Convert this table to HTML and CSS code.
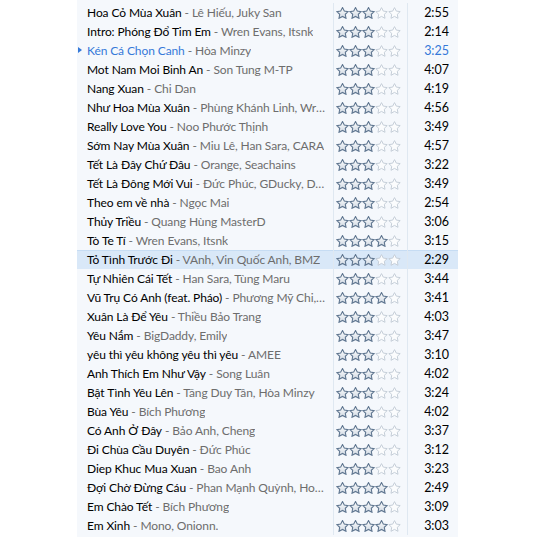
FILE: index.html
```html
<!DOCTYPE html>
<html lang="vi">
<head>
    <meta charset="UTF-8">
    <title>Playlist</title>
    <link rel="stylesheet" href="styles.css">
</head>
<body>
    <svg class="defs" width="0" height="0">
        <defs>
            <linearGradient id="starFill" x1="0" y1="0" x2="0" y2="1">
                <stop offset="0" stop-color="#ffffff"/>
                <stop offset="1" stop-color="#cfd8e2"/>
            </linearGradient>
            <path id="star" d="M6.5 0.6 L8.3 4.1 L12.2 4.6 L9.3 7.3 L10 11.3 L6.5 9.4 L3 11.3 L3.7 7.3 L0.8 4.6 L4.7 4.1 Z"/>
        </defs>
    </svg>

    <!-- Song list -->
    <div class="list" id="list"></div>

    <script>
        const songs = [
            ['Hoa Cỏ Mùa Xuân', 'Lê Hiếu, Juky San', '2:55', 3],
            ['Intro: Phóng Đổ Tim Em', 'Wren Evans, Itsnk', '2:14', 3],
            ['Kén Cá Chọn Canh', 'Hòa Minzy', '3:25', 3, 'playing'],
            ['Mot Nam Moi Binh An', 'Son Tung M-TP', '4:07', 3],
            ['Nang Xuan', 'Chi Dan', '4:19', 3],
            ['Như Hoa Mùa Xuân', 'Phùng Khánh Linh, Wren Evans', '4:56', 3],
            ['Really Love You', 'Noo Phước Thịnh', '3:49', 3],
            ['Sớm Nay Mùa Xuân', 'Miu Lê, Han Sara, CARA', '4:57', 3],
            ['Tết Là Đây Chứ Đâu', 'Orange, Seachains', '3:22', 3],
            ['Tết Là Đông Mới Vui', 'Đức Phúc, GDucky, DTAP', '3:49', 3],
            ['Theo em về nhà', 'Ngọc Mai', '2:54', 3],
            ['Thủy Triều', 'Quang Hùng MasterD', '3:06', 3],
            ['Tò Te Tí', 'Wren Evans, Itsnk', '3:15', 4],
            ['Tỏ Tình Trước Đi', 'VAnh, Vin Quốc Anh, BMZ', '2:29', 3, 'selected'],
            ['Tự Nhiên Cái Tết', 'Han Sara, Tùng Maru', '3:44', 3],
            ['Vũ Trụ Có Anh (feat. Pháo)', 'Phương Mỹ Chi, Pháo', '3:41', 4],
            ['Xuân Là Để Yêu', 'Thiều Bảo Trang', '4:03', 3],
            ['Yêu Nắm', 'BigDaddy, Emily', '3:47', 3],
            ['yêu thì yêu không yêu thì yêu', 'AMEE', '3:10', 3],
            ['Anh Thích Em Như Vậy', 'Song Luân', '4:02', 3],
            ['Bật Tình Yêu Lên', 'Tăng Duy Tân, Hòa Minzy', '3:24', 3],
            ['Bùa Yêu', 'Bích Phương', '4:02', 3],
            ['Có Anh Ở Đây', 'Bảo Anh, Cheng', '3:37', 3],
            ['Đi Chùa Cầu Duyên', 'Đức Phúc', '3:12', 3],
            ['Diep Khuc Mua Xuan', 'Bao Anh', '3:23', 3],
            ['Đợi Chờ Đừng Cáu', 'Phan Mạnh Quỳnh, Hoàng Dũng', '2:49', 4],
            ['Em Chào Tết', 'Bích Phương', '3:09', 4],
            ['Em Xinh', 'Mono, Onionn.', '3:03', 4]
        ];

        const list = document.getElementById('list');

        songs.forEach(([title, artist, time, rating, state]) => {
            const row = document.createElement('div');
            row.className = 'row' + (state ? ' ' + state : '');

            let stars = '';
            for (let i = 0; i < 5; i++) {
                stars += `<svg class="star ${i < rating ? 'on' : 'off'}" width="13" height="12" viewBox="0 0 13 12"><use href="#star"/></svg>`;
            }

            row.innerHTML = `
                <div class="name"><span class="title">${title}</span><span class="artist"> - ${artist}</span></div>
                <div class="rating">${stars}</div>
                <div class="time">${time}</div>
            `;
            list.appendChild(row);
        });
    </script>
</body>
</html>
```

FILE: styles.css
```css
body { margin: 0; background-color: #ffffff; font-family: Lato, "Noto Sans", sans-serif; font-size: 12px; }
.defs { position: absolute; }
.list { margin-left: 77px; width: 381px; height: 537px; padding-top: 3px; box-sizing: border-box; background-color: #f5f8fc; }
.row { display: grid; grid-template-columns: 256px 74px 51px; height: 19px; align-items: stretch; color: #000; }
.row > div { display: flex; align-items: center; min-width: 0; }
.name { padding-left: 10px; padding-right: 5px; position: relative; overflow: hidden; letter-spacing: -0.1px; }
.name span { white-space: pre; }
.name .artist { color: #6d6d6d; overflow: hidden; text-overflow: ellipsis; }
.rating { border-left: 1px solid #dfe8f1; padding-left: 2px; }
.time { border-left: 1px solid #dfe8f1; justify-content: flex-end; padding-right: 9px; font-size: 12.5px; }
.star { display: block; flex: none; }
.star.on { fill: url(#starFill); stroke: #5f7690; stroke-width: 1.1; }
.star.off { fill: #fbfcfd; stroke: #c5ced8; stroke-width: 1; }
.playing .title, .playing .time { color: #3579d9; }
.playing .name::before { content: ""; position: absolute; left: 1px; top: 6px; border-left: 4px solid #3579d9; border-top: 3.5px solid transparent; border-bottom: 3.5px solid transparent; }
.selected { background-color: #d9e8f8; box-shadow: inset 0 1px 0 #c6dcf3; }
```
